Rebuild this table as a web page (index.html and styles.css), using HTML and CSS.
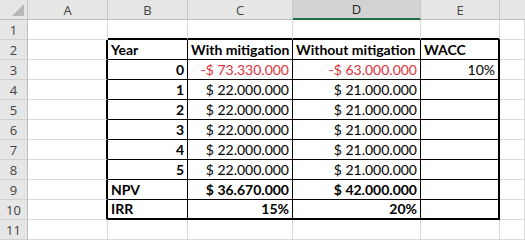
FILE: index.html
```html
<!DOCTYPE html>
<html>
<head>
<meta charset="utf-8">
<link rel="stylesheet" href="styles.css">
</head>
<body>
<div class="sheet">
  <div class="corner"><span class="tri"></span></div>
  <div class="ch">A</div>
  <div class="ch">B</div>
  <div class="ch">C</div>
  <div class="ch sel">D</div>
  <div class="ch">E</div>
  <div class="ch last"></div>

  <div class="rh">1</div>
  <div class="c"></div><div class="c tb"></div><div class="c tb"></div><div class="c tb"></div><div class="c tb"></div><div class="c"></div>

  <div class="rh">2</div>
  <div class="c tr"></div>
  <div class="c t b">Year</div>
  <div class="c t b">With mitigation</div>
  <div class="c t b">Without mitigation</div>
  <div class="c t er b">WACC</div>
  <div class="c"></div>

  <div class="rh">3</div>
  <div class="c tr"></div>
  <div class="c t b r">0</div>
  <div class="c t r neg">-$ 73.330.000</div>
  <div class="c t r neg">-$ 63.000.000</div>
  <div class="c t er r">10%</div>
  <div class="c"></div>

  <div class="rh">4</div>
  <div class="c tr"></div>
  <div class="c t b r">1</div>
  <div class="c t r">$ 22.000.000</div>
  <div class="c t r">$ 21.000.000</div>
  <div class="c t er"></div>
  <div class="c"></div>

  <div class="rh">5</div>
  <div class="c tr"></div>
  <div class="c t b r">2</div>
  <div class="c t r">$ 22.000.000</div>
  <div class="c t r">$ 21.000.000</div>
  <div class="c t er"></div>
  <div class="c"></div>

  <div class="rh">6</div>
  <div class="c tr"></div>
  <div class="c t b r">3</div>
  <div class="c t r">$ 22.000.000</div>
  <div class="c t r">$ 21.000.000</div>
  <div class="c t er"></div>
  <div class="c"></div>

  <div class="rh">7</div>
  <div class="c tr"></div>
  <div class="c t b r">4</div>
  <div class="c t r">$ 22.000.000</div>
  <div class="c t r">$ 21.000.000</div>
  <div class="c t er"></div>
  <div class="c"></div>

  <div class="rh">8</div>
  <div class="c tr"></div>
  <div class="c t b r">5</div>
  <div class="c t r">$ 22.000.000</div>
  <div class="c t r">$ 21.000.000</div>
  <div class="c t er"></div>
  <div class="c"></div>

  <div class="rh">9</div>
  <div class="c tr"></div>
  <div class="c t b">NPV</div>
  <div class="c t b r">$ 36.670.000</div>
  <div class="c t b r">$ 42.000.000</div>
  <div class="c t er"></div>
  <div class="c"></div>

  <div class="rh">10</div>
  <div class="c tr"></div>
  <div class="c t b bb">IRR</div>
  <div class="c t b r bb">15%</div>
  <div class="c t b r bb">20%</div>
  <div class="c t er bb"></div>
  <div class="c"></div>

  <div class="rh">11</div>
  <div class="c"></div><div class="c"></div><div class="c"></div><div class="c"></div><div class="c"></div><div class="c"></div>
</div>
</body>
</html>
```

FILE: styles.css
```css
html, body {
  margin: 0;
  padding: 0;
  background: #fff;
}
.sheet {
  display: grid;
  grid-template-columns: 28px 80px 80px 105px 128px 79px 1fr;
  grid-template-rows: repeat(12, 20px);
  width: 525px;
  font-family: "Lato", "Liberation Sans", sans-serif;
  font-size: 14px;
  color: #000;
}
.corner {
  background: #e6e6e6;
  border-right: 1px solid #c8c8c8;
  border-bottom: 1px solid #bdbdbd;
  box-sizing: border-box;
  position: relative;
}
.tri {
  position: absolute;
  right: 3px;
  bottom: 3px;
  width: 12px;
  height: 12px;
  background: #b8b8b8;
  clip-path: polygon(100% 0, 100% 100%, 0 100%);
}
.ch {
  background: #e6e6e6;
  border-right: 1px solid #c8c8c8;
  border-bottom: 1px solid #bdbdbd;
  box-sizing: border-box;
  display: flex;
  align-items: center;
  justify-content: center;
  font-family: "Open Sans", "Liberation Sans", sans-serif;
  font-size: 13px;
  color: #444;
}
.ch.sel {
  background: #d2d2d2;
  border-bottom: 2px solid #217346;
  color: #222;
}
.ch.last {
  border-right: none;
}
.rh {
  background: #e6e6e6;
  border-right: 1px solid #bdbdbd;
  border-bottom: 1px solid #d0d0d0;
  box-sizing: border-box;
  display: flex;
  align-items: center;
  justify-content: center;
  font-family: "Open Sans", "Liberation Sans", sans-serif;
  font-size: 13px;
  color: #444;
}
.c {
  border-right: 1px solid #dadada;
  border-bottom: 1px solid #dadada;
  box-sizing: border-box;
  display: flex;
  align-items: flex-end;
  padding: 0 3px 1px 3px;
  white-space: nowrap;
  overflow: visible;
  line-height: 17px;
}
.t {
  border-right: 1px solid #000;
  border-bottom: 1px solid #000;
}
.tr {
  border-right: 2px solid #000;
}
.er {
  border-right: 2px solid #000;
}
.tb {
  border-bottom: 2px solid #000;
}
.bb {
  border-bottom: 2px solid #000;
}
.b {
  font-weight: 700;
}
.r {
  justify-content: flex-end;
}
.neg {
  color: #e0323c;
}
```
